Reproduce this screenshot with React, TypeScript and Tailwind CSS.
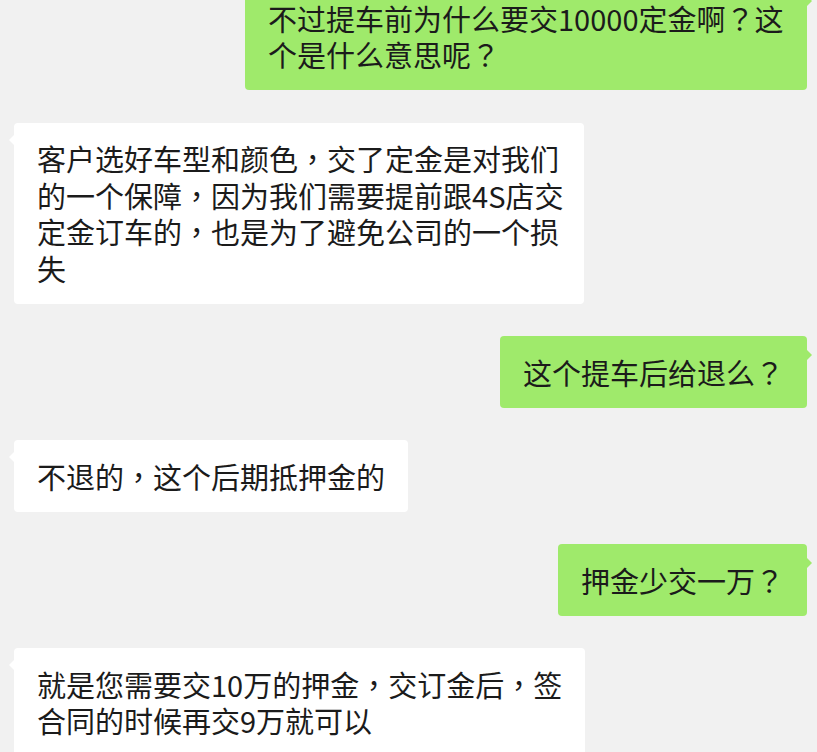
import React from "react";

type Msg = {
  id: number;
  mine: boolean;
  lines: string[];
  width?: string;
};

const messages: Msg[] = [
  {
    id: 1,
    mine: true,
    lines: ["不过提车前为什么要交10000定金啊？这", "个是什么意思呢？"],
    width: "w-[562px]",
  },
  {
    id: 2,
    mine: false,
    lines: [
      "客户选好车型和颜色，交了定金是对我们",
      "的一个保障，因为我们需要提前跟4S店交",
      "定金订车的，也是为了避免公司的一个损",
      "失",
    ],
    width: "w-[570px]",
  },
  { id: 3, mine: true, lines: ["这个提车后给退么？"] },
  { id: 4, mine: false, lines: ["不退的，这个后期抵押金的"] },
  { id: 5, mine: true, lines: ["押金少交一万？"] },
  {
    id: 6,
    mine: false,
    lines: ["就是您需要交10万的押金，交订金后，签", "合同的时候再交9万就可以"],
    width: "w-[571px]",
  },
];

// centred full-width punctuation, like the original screenshot
function Line({ text }: { text: string }) {
  const parts = text.split(/([，？])/);
  return (
    <div>
      {parts.map((p, i) =>
        p === "，" || p === "？" ? (
          <span key={i} style={{ fontFamily: '"Noto Sans CJK TC", sans-serif' }}>
            {p}
          </span>
        ) : (
          <React.Fragment key={i}>{p}</React.Fragment>
        )
      )}
    </div>
  );
}

function Bubble({ msg }: { msg: Msg }) {
  const color = msg.mine ? "bg-[#9fea6b]" : "bg-white";
  return (
    <div className={`flex ${msg.mine ? "justify-end" : "justify-start"}`}>
      <div
        className={`relative rounded-[4px] ${color} ${msg.width ?? "w-fit"} px-[23px] py-[17.5px] text-[29px] leading-[36.5px] text-[#1b1b1b] whitespace-nowrap`}
      >
        {/* little tail */}
        {msg.mine ? (
          <span className="absolute right-[-5px] top-[14px] h-0 w-0 border-y-[5px] border-l-[5px] border-y-transparent border-l-[#9fea6b]" />
        ) : (
          <span className="absolute left-[-5px] top-[12px] h-0 w-0 border-y-[5px] border-r-[5px] border-y-transparent border-r-white" />
        )}
        {msg.lines.map((l, i) => (
          <Line key={i} text={l} />
        ))}
      </div>
    </div>
  );
}

export default function App() {
  return (
    <div
      className="h-[752px] w-[817px] overflow-hidden bg-[#f1f1f1]"
      style={{ fontFamily: '"Noto Sans CJK SC", "Noto Sans", sans-serif' }}
    >
      <div className="-mt-[18px] flex flex-col gap-[32.5px] pl-[14px] pr-[10px]">
        {messages.map((m) => (
          <Bubble key={m.id} msg={m} />
        ))}
      </div>
    </div>
  );
}
